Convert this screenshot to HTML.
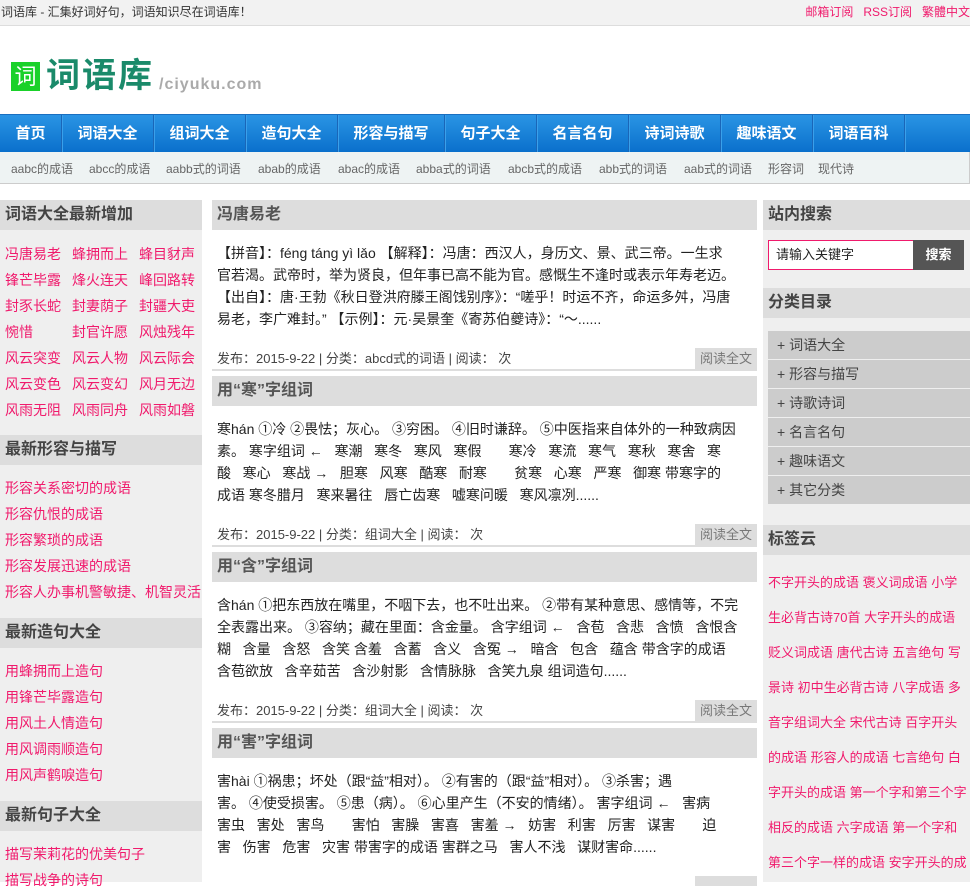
<!DOCTYPE html>
<html><head><meta charset="utf-8">
<style>
*{margin:0;padding:0;box-sizing:border-box}
body{width:970px;height:882px;overflow:hidden;background:#fff;font-family:"Liberation Sans","Noto Sans CJK SC",sans-serif;color:#333;position:relative}
.a{position:absolute}
.pk{color:#f01a6c}
#top{left:0;top:0;width:970px;height:26px;background:#f2f2f2;border-bottom:1px solid #ddd;font-size:12px;line-height:25px}
#nav{left:0;top:114px;width:970px;height:38px;background:linear-gradient(#2a94e4,#0a70cc);border-top:1px solid #1a6fc0}
#nav span{position:absolute;top:0;height:37px;line-height:37px;color:#fff;font-weight:bold;font-size:15px;text-align:center;border-right:1px solid #1a66b8;box-shadow:1px 0 0 #3aa0ea}
#sub{left:0;top:152px;width:970px;height:32px;background:#eef3f3;border-bottom:1px solid #ccc;border-right:1px solid #ccc;font-size:12px;color:#666;line-height:34px}
#sub span{position:absolute}
.h{background:#ddd;height:30px;line-height:30px;font-size:16px;font-weight:bold;color:#444;padding-left:5px}
#left{left:0;top:200px;width:202px;height:682px;background:#efefef}
.lk{position:absolute;font-size:14px;color:#f01a6c;white-space:nowrap}
#right{left:763px;top:200px;width:207px;height:682px;background:#efefef}
.art{position:absolute;left:212px;width:545px}
.art .t{background:#ddd;height:30px;line-height:30px;font-size:16px;font-weight:bold;color:#555;padding-left:5px}
.art .b{font-size:14px;line-height:22px;padding:12px 5px 0;height:118px;white-space:nowrap;color:#222}
.art .f{height:23px;border-bottom:2px solid #ddd;font-size:13px;line-height:22px;padding-left:5px;color:#444;position:relative}
.art .f i{position:absolute;right:0;top:0;width:62px;height:22px;background:#ddd;font-style:normal;color:#777;text-align:center}
.cat{position:absolute;left:5px;width:202px;height:28px;background:#ccc;font-size:14px;line-height:28px;color:#444;padding-left:9px}
</style></head><body>
<div id="top" class="a"><span style="position:absolute;left:1px">词语库 - 汇集好词好句，词语知识尽在词语库！</span><span class="pk" style="position:absolute;right:0;font-size:12px;white-space:nowrap">邮箱订阅 &nbsp; RSS订阅 &nbsp; 繁體中文</span></div>

<div class="a" style="left:11px;top:62px;width:29px;height:29px;background:#1ad12a;color:#fff;font-size:22px;line-height:29px;text-align:center">词</div>
<div class="a" style="left:46px;top:56px;font-size:34px;line-height:40px;color:#1a8a6a;font-weight:bold;letter-spacing:2px">词语库</div>
<div class="a" style="left:159px;top:73px;font-size:16px;line-height:24px;color:#aaa;font-weight:bold;letter-spacing:1px">/ciyuku.com</div>

<div id="nav" class="a">
<span style="left:0;width:62px">首页</span>
<span style="left:62px;width:92px">词语大全</span>
<span style="left:154px;width:92px">组词大全</span>
<span style="left:246px;width:92px">造句大全</span>
<span style="left:338px;width:107px">形容与描写</span>
<span style="left:445px;width:92px">句子大全</span>
<span style="left:537px;width:92px">名言名句</span>
<span style="left:629px;width:92px">诗词诗歌</span>
<span style="left:721px;width:92px">趣味语文</span>
<span style="left:813px;width:92px">词语百科</span>
</div>
<div id="sub" class="a">
<span style="left:11px">aabc的成语</span><span style="left:89px">abcc的成语</span><span style="left:166px">aabb式的词语</span><span style="left:258px">abab的成语</span><span style="left:338px">abac的成语</span><span style="left:416px">abba式的词语</span><span style="left:508px">abcb式的成语</span><span style="left:599px">abb式的词语</span><span style="left:684px">aab式的词语</span><span style="left:768px">形容词</span><span style="left:818px">现代诗</span>
</div>

<div id="left" class="a">
<div class="h">词语大全最新增加</div>
<div class="lk" style="left:5px;top:41px;line-height:26px">冯唐易老<br>锋芒毕露<br>封豕长蛇<br>惋惜<br>风云突变<br>风云变色<br>风雨无阻</div>
<div class="lk" style="left:72px;top:41px;line-height:26px">蜂拥而上<br>烽火连天<br>封妻荫子<br>封官许愿<br>风云人物<br>风云变幻<br>风雨同舟</div>
<div class="lk" style="left:139px;top:41px;line-height:26px">蜂目豺声<br>峰回路转<br>封疆大吏<br>风烛残年<br>风云际会<br>风月无边<br>风雨如磐</div>
<div class="h a" style="top:235px;width:202px">最新形容与描写</div>
<div class="lk" style="left:5px;top:275px;line-height:26px;width:197px;overflow:hidden">形容关系密切的成语<br>形容仇恨的成语<br>形容繁琐的成语<br>形容发展迅速的成语<br>形容人办事机警敏捷、机智灵活...</div>
<div class="h a" style="top:418px;width:202px">最新造句大全</div>
<div class="lk" style="left:5px;top:458px;line-height:26px">用蜂拥而上造句<br>用锋芒毕露造句<br>用风土人情造句<br>用风调雨顺造句<br>用风声鹤唳造句</div>
<div class="h a" style="top:601px;width:202px">最新句子大全</div>
<div class="lk" style="left:5px;top:641px;line-height:26px">描写茉莉花的优美句子<br>描写战争的诗句</div>
</div>

<div class="art" style="top:200px"><div class="t">冯唐易老</div>
<div class="b">【拼音】：féng táng yì lǎo 【解释】：冯唐：西汉人，身历文、景、武三帝。一生求<br>官若渴。武帝时，举为贤良，但年事已高不能为官。感慨生不逢时或表示年寿老迈。<br>【出自】：唐·王勃《秋日登洪府滕王阁饯别序》：“嗟乎！时运不齐，命运多舛，冯唐<br>易老，李广难封。” 【示例】：元·吴景奎《寄苏伯夔诗》：“～......</div>
<div class="f">发布：2015-9-22 | 分类：abcd式的词语 | 阅读： 次<i>阅读全文</i></div></div>

<div class="art" style="top:376px"><div class="t">用“寒”字组词</div>
<div class="b">寒hán ①冷 ②畏怯；灰心。 ③穷困。 ④旧时谦辞。 ⑤中医指来自体外的一种致病因<br>素。 寒字组词 ←&nbsp;&nbsp; 寒潮&nbsp;&nbsp; 寒冬&nbsp;&nbsp; 寒风&nbsp;&nbsp; 寒假&nbsp;&nbsp;&nbsp;&nbsp;&nbsp;&nbsp; 寒冷&nbsp;&nbsp; 寒流&nbsp;&nbsp; 寒气&nbsp;&nbsp; 寒秋&nbsp;&nbsp; 寒舍&nbsp;&nbsp; 寒<br>酸&nbsp;&nbsp; 寒心&nbsp;&nbsp; 寒战 →&nbsp;&nbsp; 胆寒&nbsp;&nbsp; 风寒&nbsp;&nbsp; 酷寒&nbsp;&nbsp; 耐寒&nbsp;&nbsp;&nbsp;&nbsp;&nbsp;&nbsp; 贫寒&nbsp;&nbsp; 心寒&nbsp;&nbsp; 严寒&nbsp;&nbsp; 御寒 带寒字的<br>成语 寒冬腊月&nbsp;&nbsp; 寒来暑往&nbsp;&nbsp; 唇亡齿寒&nbsp;&nbsp; 嘘寒问暖&nbsp;&nbsp; 寒风凛冽......</div>
<div class="f">发布：2015-9-22 | 分类：组词大全 | 阅读： 次<i>阅读全文</i></div></div>

<div class="art" style="top:552px"><div class="t">用“含”字组词</div>
<div class="b">含hán ①把东西放在嘴里，不咽下去，也不吐出来。 ②带有某种意思、感情等，不完<br>全表露出来。 ③容纳；藏在里面：含金量。 含字组词 ←&nbsp;&nbsp; 含苞&nbsp;&nbsp; 含悲&nbsp;&nbsp; 含愤&nbsp;&nbsp; 含恨含<br>糊&nbsp;&nbsp; 含量&nbsp;&nbsp; 含怒&nbsp;&nbsp; 含笑 含羞&nbsp;&nbsp; 含蓄&nbsp;&nbsp; 含义&nbsp;&nbsp; 含冤 →&nbsp;&nbsp; 暗含&nbsp;&nbsp; 包含&nbsp;&nbsp; 蕴含 带含字的成语<br>含苞欲放&nbsp;&nbsp; 含辛茹苦&nbsp;&nbsp; 含沙射影&nbsp;&nbsp; 含情脉脉&nbsp;&nbsp; 含笑九泉 组词造句......</div>
<div class="f">发布：2015-9-22 | 分类：组词大全 | 阅读： 次<i>阅读全文</i></div></div>

<div class="art" style="top:728px"><div class="t">用“害”字组词</div>
<div class="b">害hài ①祸患；坏处（跟“益”相对）。 ②有害的（跟“益”相对）。 ③杀害；遇<br>害。 ④使受损害。 ⑤患（病）。 ⑥心里产生（不安的情绪）。 害字组词 ←&nbsp;&nbsp; 害病<br>害虫&nbsp;&nbsp; 害处&nbsp;&nbsp; 害鸟&nbsp;&nbsp;&nbsp;&nbsp;&nbsp;&nbsp; 害怕&nbsp;&nbsp; 害臊&nbsp;&nbsp; 害喜&nbsp;&nbsp; 害羞 →&nbsp;&nbsp; 妨害&nbsp;&nbsp; 利害&nbsp;&nbsp; 厉害&nbsp;&nbsp; 谋害&nbsp;&nbsp;&nbsp;&nbsp;&nbsp;&nbsp; 迫<br>害&nbsp;&nbsp; 伤害&nbsp;&nbsp; 危害&nbsp;&nbsp; 灾害 带害字的成语 害群之马&nbsp;&nbsp; 害人不浅&nbsp;&nbsp; 谋财害命......</div>
<div class="a" style="left:483px;top:148px;width:62px;height:10px;background:#ddd"></div></div>

<div id="right" class="a">
<div class="h">站内搜索</div>
<div class="a" style="left:5px;top:40px;width:146px;height:30px;background:#fff;border:1px solid #f01a6c;font-size:13px;line-height:28px;padding-left:7px;color:#222">请输入关键字</div>
<div class="a" style="left:150px;top:40px;width:51px;height:30px;background:#555;color:#fff;font-weight:bold;font-size:13px;line-height:30px;text-align:center">搜索</div>
<div class="h a" style="top:88px;width:207px">分类目录</div>
<div class="cat" style="top:131px">+ 词语大全</div>
<div class="cat" style="top:160px">+ 形容与描写</div>
<div class="cat" style="top:189px">+ 诗歌诗词</div>
<div class="cat" style="top:218px">+ 名言名句</div>
<div class="cat" style="top:247px">+ 趣味语文</div>
<div class="cat" style="top:276px">+ 其它分类</div>
<div class="h a" style="top:325px;width:207px">标签云</div>
<div class="a pk" style="left:5px;top:365px;width:202px;font-size:13px;line-height:35px;white-space:nowrap">不字开头的成语 褒义词成语 小学<br>生必背古诗70首 大字开头的成语<br>贬义词成语 唐代古诗 五言绝句 写<br>景诗 初中生必背古诗 八字成语 多<br>音字组词大全 宋代古诗 百字开头<br>的成语 形容人的成语 七言绝句 白<br>字开头的成语 第一个字和第三个字<br>相反的成语 六字成语 第一个字和<br>第三个字一样的成语 安字开头的成</div>
</div>
</body></html>
